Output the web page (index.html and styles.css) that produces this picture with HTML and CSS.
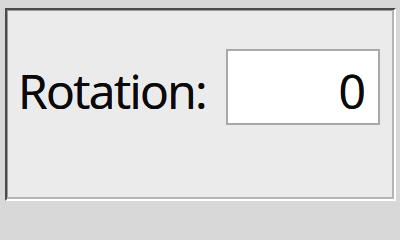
FILE: index.html
```html
<!DOCTYPE html>
<html>
<head>
<meta charset="utf-8">
<link rel="stylesheet" href="styles.css">
</head>
<body>
<div class="frame">
  <div class="panel">
    <div class="row">
      <span class="label">Rotation:</span>
      <div class="field"><span class="value">0</span></div>
    </div>
  </div>
</div>
</body>
</html>
```

FILE: styles.css
```css
html, body {
  margin: 0;
  padding: 0;
}
html {
  background: #d8d8d8;
}
body {
  width: 400px;
  height: 209px;
  background: #d8d8d8;
  overflow: hidden;
  font-family: "Open Sans", "Noto Sans", sans-serif;
}
.frame {
  box-sizing: border-box;
  height: 209px;
  padding: 8px 4px 8px 5px;
}
.panel {
  box-sizing: border-box;
  height: 100%;
  background: #ebebeb;
  border-style: solid;
  border-width: 2px;
  border-color: #4a4a4a #ffffff #ffffff #4a4a4a;
  box-shadow: inset -2px -2px 0 #b4b4b4, inset 1px 1px 0 #9a9a9a;
  padding: 39px 14px 0 11px;
}
.row {
  display: flex;
  align-items: baseline;
  justify-content: space-between;
}
.label {
  font-size: 48px;
  line-height: 1;
  letter-spacing: -1.6px;
  color: #0a0a0a;
  text-shadow: 0 0 0.6px #0a0a0a;
}
.field {
  box-sizing: border-box;
  width: 154px;
  height: 76px;
  background: #fff;
  border: 2px solid #a8a8a8;
  display: flex;
  justify-content: flex-end;
  padding: 16px 12px 0 0;
  font-size: 48px;
  line-height: 1;
  color: #0a0a0a;
  text-shadow: 0 0 0.6px #0a0a0a;
}
```
